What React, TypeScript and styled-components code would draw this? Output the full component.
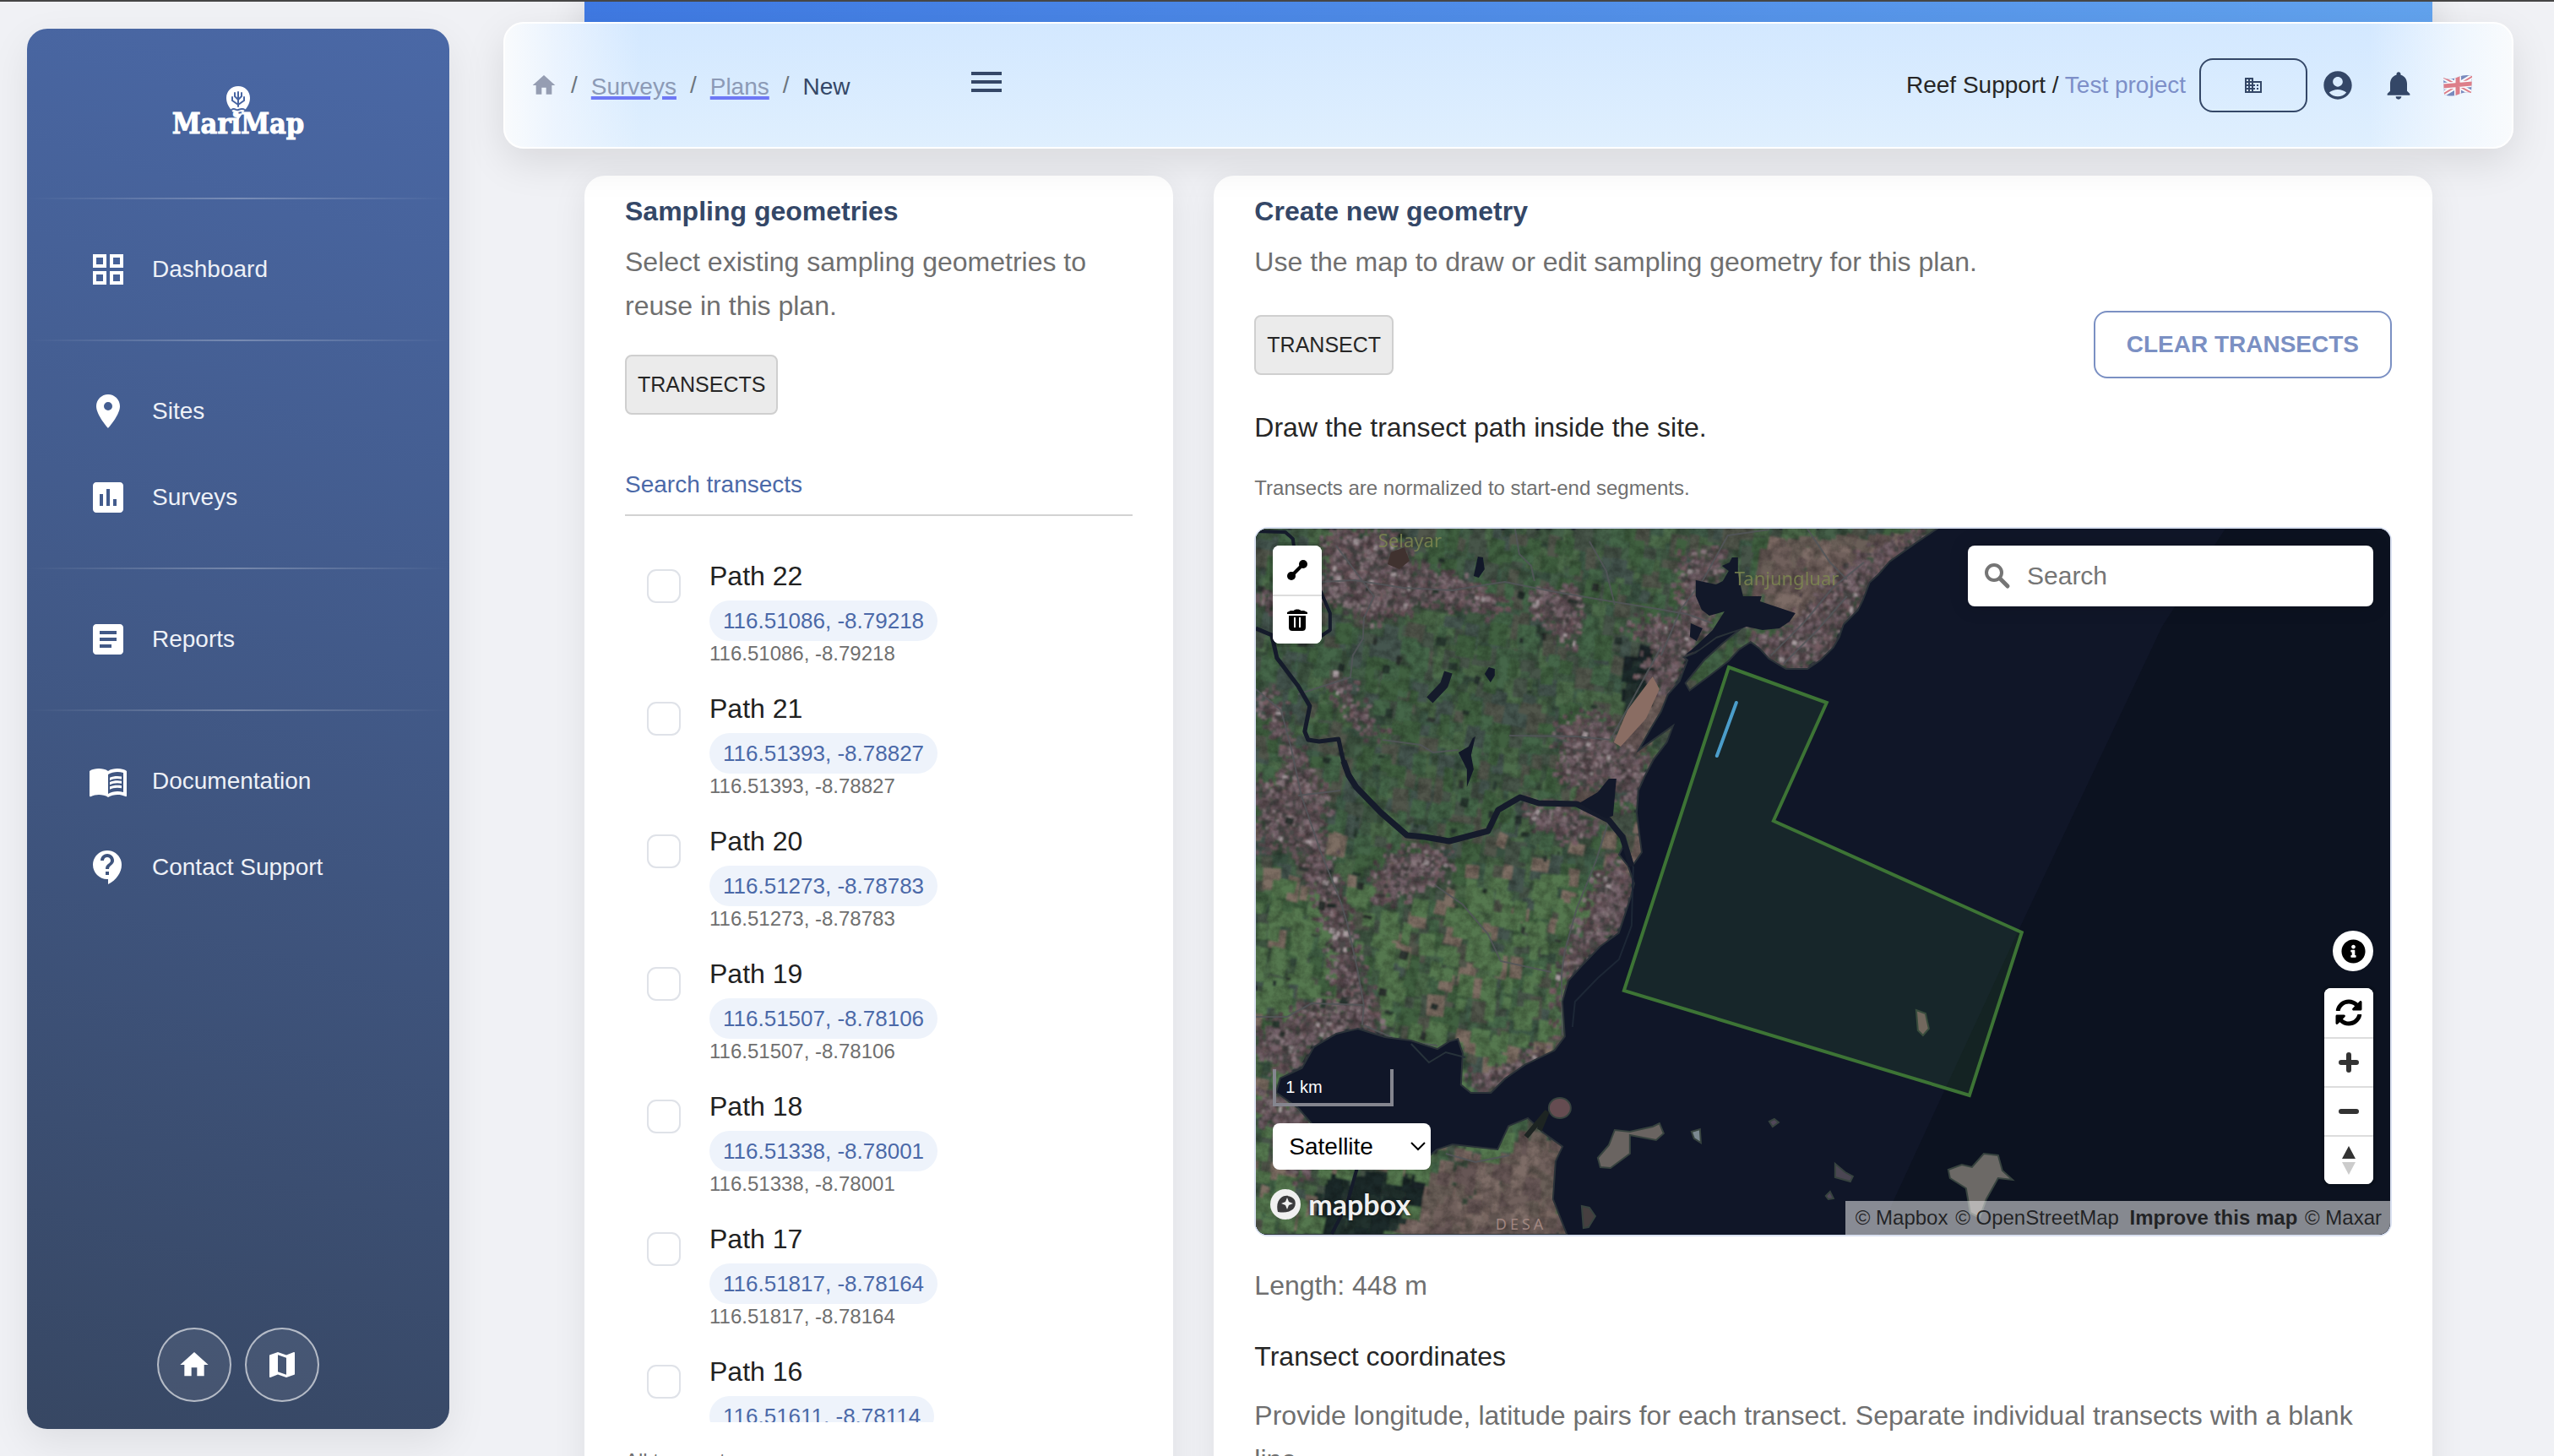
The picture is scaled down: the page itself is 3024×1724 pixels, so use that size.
import React from "react";
import styled, { createGlobalStyle } from "styled-components";
import {
  MdPlace,
  MdAssessment,
  MdArticle,
  MdMenuBook,
  MdContactSupport,
  MdHome,
  MdMap,
  MdMenu,
  MdBusiness,
  MdAccountCircle,
  MdNotifications,
} from "react-icons/md";
import { FaSyncAlt, FaInfoCircle } from "react-icons/fa";

const sans = `"Liberation Sans", Arial, Helvetica, sans-serif`;
const ink = "#344767";
const muted = "#6f6f6f";
const text = "#262626";

const GlobalStyle = createGlobalStyle`
  *, *::before, *::after { box-sizing: border-box; }
  body { margin: 0; background: #f0f1f5; font-family: ${sans}; font-size: 32px; line-height: 52px; color: ${text}; }
  h2, p, ul { margin: 0; padding: 0; }
  button, input, select { font-family: inherit; margin: 0; }
  button { cursor: pointer; }
`;

/* ---------- shell ---------- */

const Shell = styled.div`
  display: flex;
  height: 100vh;
  overflow: hidden;
  border-top: 2px solid #464646;
`;

const Sidebar = styled.aside`
  display: flex;
  flex-direction: column;
  flex: 0 0 500px;
  margin: 32px 0 32px 32px;
  padding-bottom: 32px;
  border-radius: 24px;
  background: linear-gradient(195deg, #4a68a6, #374763);
  box-shadow: 0 16px 48px rgba(0, 0, 0, 0.08);
`;

const Brand = styled.div`
  display: flex;
  flex-direction: column;
  align-items: center;
  height: 200px;
  padding-top: 68px;
  color: #fff;
`;

const BrandName = styled.span`
  margin-top: -16px;
  font: bold 34px/40px "DejaVu Serif Condensed", "DejaVu Serif", serif;
  -webkit-text-stroke: 1px #fff;
`;

const Divider = styled.hr`
  width: 100%;
  height: 2px;
  margin: 0;
  border: 0;
  background: linear-gradient(to right, rgba(255, 255, 255, 0), rgba(255, 255, 255, 0.27), rgba(255, 255, 255, 0));
`;

const NavGroup = styled.ul`
  margin: 32px 0;
  list-style: none;
`;

const NavLink = styled.a`
  display: flex;
  align-items: center;
  gap: 28px;
  height: 102px;
  padding-left: 72px;
  color: #eef1f7;
  font-size: 28px;
  text-decoration: none;
  svg { color: #fff; }
`;

const SidebarFooter = styled.div`
  display: flex;
  justify-content: center;
  gap: 16px;
  margin-top: auto;
`;

const RoundLink = styled.a`
  display: grid;
  place-items: center;
  width: 88px;
  height: 88px;
  border: 2px solid rgba(255, 255, 255, 0.6);
  border-radius: 50%;
  background: rgba(255, 255, 255, 0.07);
  color: #fff;
`;

const Main = styled.main`
  flex: 1;
  min-width: 0;
  padding: 0 48px 0 64px;
`;

const Banner = styled.div`
  height: 100px;
  margin: 0 96px;
  background: linear-gradient(100deg, #3f79e2, #62a3ee);
  box-shadow: 0 0 48px rgba(0, 0, 0, 0.14);
`;

/* ---------- header ---------- */

const Header = styled.header`
  position: relative;
  z-index: 2;
  display: flex;
  align-items: center;
  height: 150px;
  margin-top: -76px;
  padding: 0 46px 0 30px;
  border: 2px solid #fff;
  border-radius: 24px;
  background:
    linear-gradient(to right, #f9fbfd, rgba(240, 246, 254, 0.8) 60px, rgba(230, 242, 255, 0) 160px),
    linear-gradient(to left, #f9fbfd, rgba(244, 249, 254, 0.85) 60px, rgba(230, 242, 255, 0) 170px),
    linear-gradient(to bottom, #d3e8ff, #dfeffe);
  box-shadow: 0 16px 48px rgba(0, 0, 0, 0.1);
  font-size: 28px;
`;

const Crumbs = styled.nav`
  display: flex;
  align-items: center;
  gap: 16px;
  flex: 0 0 516px;
  color: ${ink};
`;

const Slash = styled.span`
  color: #6c757d;
`;

const Crumb = styled.span`
  padding-top: 4px;
`;

const CrumbLink = styled.a`
  padding-top: 4px;
  color: #8c9ab6;
  text-decoration: underline;
  text-decoration-color: #6e78f5;
  text-decoration-thickness: 4px;
  text-underline-offset: 2px;
`;

const HomeCrumb = styled.a`
  display: flex;
  color: #959db2;
`;

const IconButton = styled.button`
  display: flex;
  padding: 0;
  border: 0;
  background: none;
  color: ${ink};
`;

const MenuButton = styled(IconButton)`
  padding-bottom: 8px;
`;

const HeaderActions = styled.div`
  display: flex;
  align-items: center;
  margin-left: auto;
  gap: 32px;
`;

const ProjectSwitch = styled.div`
  display: flex;
  align-items: center;
  gap: 16px;
`;

const ProjectLink = styled.a`
  color: #7d8fc8;
  text-decoration: none;
`;

const OrgButton = styled.button`
  display: grid;
  place-items: center;
  width: 128px;
  height: 64px;
  border: 2px solid ${ink};
  border-radius: 16px;
  background: none;
  color: ${ink};
`;

/* ---------- cards ---------- */

const Columns = styled.div`
  display: grid;
  grid-template-columns: calc((100% - 96px) / 3) 1fr;
  gap: 48px;
  margin: 32px 96px 0;
`;

const Card = styled.section`
  min-width: 0;
  padding: 16px 48px 64px;
  border-radius: 24px;
  background: #fff;
  box-shadow: 0 8px 40px rgba(0, 0, 0, 0.08);
`;

const CardTitle = styled.h2`
  margin-bottom: 8px;
  color: ${ink};
  font-size: 32px;
`;

const Body = styled.p<{ $strong?: boolean; $gap?: number }>`
  margin-top: ${(p) => p.$gap ?? 0}px;
  color: ${(p) => (p.$strong ? text : muted)};
`;

const Caption = styled.p`
  margin-top: 24px;
  color: ${muted};
  font-size: 24px;
  line-height: 44px;
`;

const Toggle = styled.button`
  height: 71px;
  padding: 0 13px;
  border: 2px solid #cfcfcf;
  border-radius: 8px;
  background: #ebebeb;
  color: ${text};
  font-size: 25px;
`;

const ToggleRow = styled.div`
  display: flex;
  align-items: center;
  justify-content: space-between;
  margin-top: 32px;
`;

const OutlineButton = styled.button`
  height: 80px;
  padding: 0 37px;
  border: 2px solid #7b90c3;
  border-radius: 16px;
  background: #fff;
  color: #7b90c3;
  font-size: 28px;
  font-weight: bold;
`;

const SearchTransects = styled.input`
  display: block;
  width: 100%;
  height: 56px;
  margin-top: 64px;
  padding: 0 0 16px;
  border: 0;
  border-bottom: 2px solid #d2d2d2;
  outline: 0;
  background: none;
  font-size: 28px;
  &::placeholder { color: #4b69a8; opacity: 1; }
`;

const PathList = styled.ul`
  max-height: 1040px;
  margin-top: 33px;
  overflow: hidden;
  list-style: none;
`;

const PathItem = styled.label`
  display: flex;
  gap: 34px;
  padding: 13px 0 12px 26px;
`;

const Checkbox = styled.input`
  appearance: none;
  flex: none;
  width: 40px;
  height: 40px;
  margin: 17px 0 0;
  border: 2px solid #dfe2e8;
  border-radius: 11px;
  background: #fff;
`;

const PathText = styled.span`
  display: flex;
  flex-direction: column;
  align-items: flex-start;
`;

const PathName = styled.span`
  color: #212121;
  line-height: 50px;
`;

const Chip = styled.span`
  margin-top: 4px;
  padding: 0 16px;
  border-radius: 24px;
  background: #eef3fb;
  color: #4b69a8;
  font-size: 26px;
  line-height: 48px;
`;

const PathCoords = styled.span`
  color: ${muted};
  font-size: 24px;
  line-height: 30px;
`;

/* ---------- map ---------- */

const MapFrame = styled.div`
  position: relative;
  height: 840px;
  margin-top: 24px;
  overflow: hidden;
  border: 2px solid #d9e0f0;
  border-radius: 16px;
  background: #101628;
`;

const MapCanvas = styled.svg`
  display: block;
  width: 100%;
  height: 100%;
`;

const Corner = styled.div<{ $v: "top" | "bottom"; $h: "left" | "right"; $clear?: number }>`
  position: absolute;
  ${(p) => p.$v}: ${(p) => p.$clear ?? 20}px;
  ${(p) => p.$h}: 20px;
  display: flex;
  flex-direction: column;
  align-items: ${(p) => (p.$h === "left" ? "flex-start" : "flex-end")};
  gap: 20px;
`;

const ControlGroup = styled.div`
  display: flex;
  flex-direction: column;
  overflow: hidden;
  border-radius: 8px;
  background: #fff;
  box-shadow: 0 0 0 4px rgba(0, 0, 0, 0.1);
`;

const ControlButton = styled.button`
  display: grid;
  place-items: center;
  width: 58px;
  height: 58px;
  padding: 0;
  border: 0;
  background: #fff;
  color: #000;
  & + & { border-top: 2px solid #ddd; }
`;

const InfoButton = styled.button`
  display: grid;
  place-items: center;
  width: 48px;
  height: 48px;
  padding: 0;
  border: 0;
  border-radius: 50%;
  background: #fff;
  color: #000;
`;

const Geocoder = styled.label`
  display: flex;
  align-items: center;
  gap: 18px;
  width: 480px;
  height: 72px;
  padding: 0 18px;
  border-radius: 8px;
  background: #fff;
  box-shadow: 0 0 20px 4px rgba(0, 0, 0, 0.1);
`;

const GeocoderInput = styled.input`
  flex: 1;
  min-width: 0;
  padding: 0;
  border: 0;
  outline: 0;
  font-size: 30px;
  &::placeholder { color: #757575; opacity: 1; }
`;

const ScaleBar = styled.div`
  width: 143px;
  height: 44px;
  padding-left: 11px;
  border: 4px solid #85868f;
  border-top: 0;
  color: #fff;
  font-size: 20px;
  line-height: 42px;
`;

const StyleSelect = styled.select`
  appearance: none;
  width: 187px;
  height: 55px;
  padding: 0 19px;
  border: 0;
  border-radius: 8px;
  background: #fff;
  color: #000;
  font-size: 28px;
`;

const SelectWrap = styled.div`
  position: relative;
  display: flex;
  svg {
    position: absolute;
    right: 6px;
    top: 22px;
    pointer-events: none;
  }
`;

const MapboxLogo = styled.a`
  position: absolute;
  left: 16px;
  bottom: 14px;
  display: flex;
  align-items: center;
  gap: 8px;
  color: #f0f0f0;
  font: 700 34px/44px Lato, sans-serif;
  text-decoration: none;
  text-shadow: 0 0 4px rgba(0, 0, 0, 0.6);
`;

const Attribution = styled.div`
  position: absolute;
  right: 0;
  bottom: 0;
  padding: 0 10px;
  background: rgba(255, 255, 255, 0.5);
  font-size: 24px;
  line-height: 40px;
  a { margin-left: 2px; color: rgba(0, 0, 0, 0.75); text-decoration: none; }
  a[data-strong] { margin-left: 6px; font-weight: bold; }
`;

/* ---------- satellite drawing ---------- */

type Pt = [number, number];

const parse = (s: string): Pt[] => s.split(" ").map((p) => p.split(",").map(Number) as Pt);

function inside([x, y]: Pt, poly: Pt[]) {
  let hit = false;
  for (let i = 0, j = poly.length - 1; i < poly.length; j = i++) {
    const [xi, yi] = poly[i];
    const [xj, yj] = poly[j];
    if (yi > y !== yj > y && x < ((xj - xi) * (y - yi)) / (yj - yi) + xi) hit = !hit;
  }
  return hit;
}

function randomizer(seed: number) {
  let s = seed;
  return () => {
    s = (s * 1664525 + 1013904223) % 4294967296;
    return s / 4294967296;
  };
}

const COAST =
  "0,0 805,0 781,16 750,38 736,54 726,63 718,84 712,96 695,113 690,128 683,140 668,155 653,165 628,165 608,153 597,141 586,133 572,142 559,156 537,173 514,190 510,183 532,156 554,136 579,116 545,128 520,146 505,152 510,156 501,180 487,196 479,216 467,236 450,266 492,236 486,252 470,273 460,292 452,310 450,336 453,360 456,383 447,396 438,363 418,343 436,372 429,386 440,400 447,420 443,436 436,457 429,478 407,494 387,515 369,535 362,560 365,601 353,617 318,634 295,650 278,667 255,667 244,658 246,621 240,603 229,606 215,615 184,605 153,601 121,591 95,597 68,613 54,638 28,650 23,668 50,687 68,708 72,757 190,757 215,736 233,730 287,736 300,708 322,699 340,716 362,732 354,749 351,794 367,835 0,835";

const COAST_POLY = parse(COAST);

const TOWNS = [
  "79,0 148,0 193,43 260,63 304,86 270,94 197,86 135,106 110,90 90,80 0,90 0,72 78,66",
  "322,76 376,66 380,100 371,143 349,116 330,96",
  "505,33 550,25 545,60 521,61 537,103 510,112 500,70",
  "440,110 500,100 540,108 505,152 510,156 480,200 455,170 470,140",
  "620,120 660,80 700,40 770,0 805,0 726,63 695,113 683,140 653,165 628,165 586,133 581,118",
  "354,230 403,215 429,256 450,266 470,273 452,310 450,340 418,296 383,305 360,290",
  "0,195 20,190 45,250 60,290 81,316 75,360 110,470 126,590 100,590 85,480 50,376 0,376 0,300 40,290 20,240",
  "84,175 100,172 130,220 150,250 135,245 105,215",
  "162,380 224,376 224,410 180,430 139,440 145,400",
  "310,325 383,330 400,350 380,372 330,352",
  "419,383 447,420 436,457 407,494 365,535 362,600 355,590 358,520 395,440 410,400",
  "118,500 135,560 153,601 121,591 80,597 40,640 0,620 0,590 66,562 110,562",
  "246,648 290,640 353,605 353,617 278,667 255,667",
  "0,660 23,672 50,687 66,708 30,720 0,690",
  "28,735 62,735 62,765 40,765",
].map(parse);

const SCRUB = [
  "190,760 215,736 233,730 287,736 300,708 322,699 362,732 351,794 367,835 150,835",
  "600,0 805,0 700,50 640,100 600,80 577,60",
  "420,250 430,222 470,170 478,200 455,235",
  "428,386 450,300 470,260 486,252 452,340 456,383 447,396",
  "383,325 418,296 400,290 370,300",
].map(parse);

const MARSH = [
  "72,757 190,757 160,800 120,835 60,835",
  "430,145 455,130 470,165 455,200 425,205",
  "330,790 351,794 367,835 345,835",
  "23,620 68,600 54,638 28,650",
].map(parse);

const GREENS = ["#3f5943", "#446048", "#3c5340", "#4a6647", "#415c4a", "#4e6c4c", "#47554a", "#394f3f", "#51564b", "#45664a", "#445650", "#40603f"];
const MAUVES = ["#5f4f54", "#69575c", "#74626a", "#54474c", "#85747a", "#63545a", "#755c62", "#4c4849"];
const BROWNS = ["#665754", "#70605c", "#786660", "#5f534f", "#6b5e58", "#7d6c66"];
const DARKS = ["#1c2c2a", "#22332e", "#1a2729", "#263430"];

function buildTerrain() {
  const rand = randomizer(7);
  const paths: Record<string, string> = {};
  const quad = (c: string, x: number, y: number, w: number, h: number, skew: number) => {
    paths[c] =
      (paths[c] || "") +
      `M${x.toFixed(1)} ${y.toFixed(1)}l${w.toFixed(1)} ${skew.toFixed(1)}l${(-skew).toFixed(1)} ${h.toFixed(1)}l${(-w).toFixed(1)} ${(-skew).toFixed(1)}z`;
  };
  const pick = (list: string[]) => list[Math.floor(rand() * list.length)];
  for (let y = -8; y < 840; y += 13) {
    for (let x = -8; x < 810; x += 11) {
      const jx = x + rand() * 8;
      const jy = y + rand() * 8;
      if (TOWNS.some((t) => inside([x, y], t))) continue;
      const zone = SCRUB.some((z) => inside([x, y], z)) ? BROWNS : MARSH.some((z) => inside([x, y], z)) ? DARKS : GREENS;
      const bright = zone === GREENS && y > 400 && rand() > 0.7;
      const bare = zone === GREENS && y > 330 && rand() > 0.93;
      quad(bare ? "#7d6e64" : bright ? "#54784f" : pick(zone), jx, jy, 9 + rand() * 14, 12 + rand() * 18, 1 + rand() * 4);
    }
  }
  for (let y = 0; y < 835; y += 4) {
    for (let x = 0; x < 806; x += 4) {
      const edge: Pt = [x + (rand() - 0.5) * 24, y + (rand() - 0.5) * 24];
      if (!TOWNS.some((t) => inside(edge, t))) continue;
      if (!inside([x, y], COAST_POLY)) continue;
      quad(rand() > 0.985 ? "#a89ca0" : pick(MAUVES), x, y, 3 + rand() * 4, 3 + rand() * 4, rand() * 2);
    }
  }
  for (let i = 0; i < 70; i++) {
    quad(pick(["#2a3a30", "#2f3430", "#26332f"]), rand() * 440, rand() * 600, 3 + rand() * 9, 3 + rand() * 8, rand() * 3);
  }
  return Object.entries(paths);
}

const TERRAIN = buildTerrain();

const ROADS = [
  "78,63 117,61 175,70 233,73 262,68 295,63 350,74 420,86 470,94 510,101 541,112",
  "608,1 559,8 530,60 503,96 480,150",
  "307,0 312,30 326,44 330,62",
  "95,20 140,80 128,106 127,130 115,150 112,176 50,196",
  "418,345 403,393 380,450 366,500 362,527 363,600",
  "0,190 30,215 42,260 54,316 77,383 100,440 108,466 120,520 128,564 126,588",
  "0,578 37,578 66,562 128,564",
  "128,588 170,606 215,612",
  "212,422 245,445 275,480 290,512 350,525",
  "150,250 195,256 210,265 240,262",
  "300,245 380,246 420,250 480,140",
  "653,0 680,40 700,60",
  "610,150 650,110 683,70 720,40",
  "625,160 665,120 700,80",
  "225,740 260,750 300,742",
  "50,316 100,310",
  "395,15 415,50 425,90",
];

function Satellite() {
  return (
    <MapCanvas viewBox="0 0 1343 836" preserveAspectRatio="xMidYMid slice" role="img" aria-label="Satellite map of the survey site">
      <defs>
        <clipPath id="land">
          <polygon points={COAST} />
        </clipPath>
        <filter id="soften" x="0" y="0" width="100%" height="100%">
          <feGaussianBlur stdDeviation="1" />
        </filter>
        <filter id="grain" x="0" y="0" width="100%" height="100%">
          <feTurbulence type="fractalNoise" baseFrequency="0.09" numOctaves="4" seed="4" />
          <feColorMatrix values="0 0 0 0 0  0 0 0 0 0  0 0 0 0 0  0 1.6 0 0 -0.55" />
        </filter>
      </defs>
      <rect width="1343" height="836" fill="#101628" />
      <polygon points="1148,0 1073,116 903,476 755,796 738,836 1343,836 1343,0" fill="#0c1220" />
      <polygon points={COAST} fill="#3f5141" stroke="#2a3238" strokeWidth="4" />
      <g clipPath="url(#land)">
        <g filter="url(#soften)">
          {TERRAIN.map(([fill, d]) => (
            <path key={fill} d={d} fill={fill} />
          ))}
        </g>
        <rect width="810" height="836" filter="url(#grain)" opacity="0.35" />
        <polygon points="424,253 440,215 470,175 478,190 462,225 432,258" fill="#8a6d63" />
        <polygon points="160,28 176,22 182,38 170,48 156,42" fill="#40322f" />
        <g fill="none" stroke="#53565a" strokeWidth="2" opacity="0.85">
          {ROADS.map((r) => (
            <polyline key={r} points={r} />
          ))}
        </g>
      </g>
      <g fill="none" stroke="#151b2b" strokeLinejoin="round">
        <polyline points="0,118 19,126 25,153 50,186 64,210 58,240 62,250 75,252 98,249 102,268 106,283 119,306" strokeWidth="5" />
        <polyline points="104,275 110,292 119,306 148,336 179,363 200,365 229,370 275,358 287,333 313,318 335,325 380,326 418,345 434,365 445,400" strokeWidth="7" />
        <polyline points="0,3 35,4 44,12 45,20 75,70 88,100 88,120 76,128" strokeWidth="4" />
        <polyline points="120,757 108,800 90,835" strokeWidth="4" />
        <polyline points="228,170 223,185 206,203" strokeWidth="10" />
      </g>
      <g fill="#121829">
        <polygon points="271,172 276,164 283,166 283,174 278,182" />
        <polygon points="263,33 269,34 271,48 264,58 258,56" />
        <polygon points="257,248 260,246 255,268 258,285 250,306 250,285 240,265 252,258" />
        <polygon points="521,61 545,66 553,62 560,50 552,44 561,40 564,34 571,34 571,54 577,80 599,80 597,86 639,100 632,110 620,118 600,120 581,116 545,128 525,143 508,150 520,140 541,120 555,98 537,103 528,96 521,80" />
        <polygon points="515,112 529,118 522,133 514,128" />
        <polygon points="383,325 405,312 418,296 427,296 423,340 415,343" />
      </g>
      <g stroke="#37433f" strokeWidth="2">
        <ellipse cx="360" cy="686" rx="13" ry="12" fill="#654c51" />
        <polygon points="405,745 418,730 425,712 443,714 470,708 478,704 483,716 474,724 443,718 443,740 420,757 408,756" fill="#6a6461" />
        <polygon points="516,714 526,711 527,727 519,722" fill="#7b8891" />
        <polygon points="608,702 614,699 619,703 612,708" fill="#51475a" />
        <polygon points="675,790 680,785 684,793 678,794" fill="#51475a" />
        <polygon points="386,802 395,804 402,814 394,827 388,828" fill="#463f40" />
        <polygon points="686,752 698,762 707,767 704,773 686,768" fill="#4b4653" />
        <polygon points="782,570 793,574 797,592 790,600 784,594" fill="#7b6366" />
        <polygon points="820,759 836,753 848,756 862,740 879,742 884,760 896,771 879,769 865,794 857,816 846,810 841,781 822,769" fill="#6c6966" />
      </g>
      <polyline points="320,720 345,690 336,712" fill="none" stroke="#1d2422" strokeWidth="6" />
      <polyline points="184,610 205,632 225,620 248,626" fill="none" stroke="#27323a" strokeWidth="2" />
      <polyline points="447,400 445,470 430,510 405,532 378,560 375,590" fill="none" stroke="#1d2736" strokeWidth="2" />
      <g fill="#7d8750" fontFamily='"Noto Sans", sans-serif' fontSize="22">
        <text x="145" y="22" opacity="0.85">Selayar</text>
        <text x="567" y="67" opacity="0.85">Tanjungluar</text>
        <text x="284" y="830" fill="#a08680" fontSize="18" letterSpacing="4">DESA</text>
      </g>
      <polygon points="560,164 676,206 613,346 907,478 845,671 436,547" fill="rgba(64,132,54,0.15)" stroke="#3d7435" strokeWidth="4" />
      <line x1="569" y1="206" x2="546" y2="269" stroke="#4b9dca" strokeWidth="4" strokeLinecap="round" />
    </MapCanvas>
  );
}

/* ---------- small drawings ---------- */

const GridIcon = () => (
  <svg width="48" height="48" viewBox="0 0 24 24" fill="currentColor" aria-hidden="true">
    <path fillRule="evenodd" d="M3 3h8v8H3zM5 5v4h4V5zM13 3h8v8h-8zM15 5v4h4V5zM3 13h8v8H3zM5 15v4h4v-4zM13 13h8v8h-8zM15 15v4h4v-4z" />
  </svg>
);

const CoralPin = () => (
  <svg width="30" height="40" viewBox="0 0 30 40" aria-hidden="true">
    <path fill="#fff" d="M15 0C7 0 1 6 1 14c0 7 4 12 8 17l6 9 6-9c4-5 8-10 8-17C29 6 23 0 15 0z" />
    <g fill="none" stroke="#4865a2" strokeWidth="2" strokeLinecap="round">
      <path d="M15 24V7M15 16l-4-4V8M15 16l4-4V8M15 22l-7-5v-4M15 22l7-5v-4" />
      <path d="M7 28c4-3 5 1 8 0s5-2 8 0M9 32c3-2 4 1 6 0s4-1 6 0" />
    </g>
  </svg>
);

const UkFlag = () => (
  <svg width="36" height="26" viewBox="0 0 36 26" opacity="0.6" aria-hidden="true">
    <clipPath id="flag">
      <path d="M1 4C8 7 14 5 19 3s10-3 16-1l-1 20c-6-2-11 0-16 2s-11 2-16 0z" />
    </clipPath>
    <g clipPath="url(#flag)">
      <rect width="36" height="26" fill="#2b4394" />
      <path d="M0 3L36 23M0 24L36 2" stroke="#fff" strokeWidth="6" />
      <path d="M0 3L36 23M0 24L36 2" stroke="#d22f3c" strokeWidth="2" />
      <path d="M18 0V26M0 14L36 11" stroke="#fff" strokeWidth="8" />
      <path d="M18 0V26M0 14L36 11" stroke="#d22f3c" strokeWidth="5" />
    </g>
  </svg>
);

const LineIcon = () => (
  <svg width="28" height="28" viewBox="0 0 28 28" aria-hidden="true">
    <path d="M7 21L21 7" stroke="#000" strokeWidth="4" />
    <circle cx="7" cy="21" r="5" />
    <circle cx="21" cy="7" r="5" />
  </svg>
);

const TrashIcon = () => (
  <svg width="28" height="28" viewBox="0 0 28 28" aria-hidden="true">
    <path d="M10 3c0-2 8-2 8 0h4l4 2v2H2V5l4-2zM4 9h20v14c0 3-2 4-4 4H8c-2 0-4-1-4-4z" />
    <path d="M11 11v12M17 11v12" stroke="#fff" strokeWidth="2" />
  </svg>
);

const SearchIcon = () => (
  <svg width="34" height="34" viewBox="0 0 34 34" fill="none" stroke="#757575" aria-hidden="true">
    <circle cx="13" cy="13" r="9" strokeWidth="4" />
    <path d="M20 20l9 9" strokeWidth="5" strokeLinecap="round" />
  </svg>
);

const PlusIcon = () => (
  <svg width="24" height="24" viewBox="0 0 24 24" stroke="#333" strokeWidth="6" strokeLinecap="round" aria-hidden="true">
    <path d="M3 12h18M12 3v18" />
  </svg>
);

const MinusIcon = () => (
  <svg width="24" height="24" viewBox="0 0 24 24" stroke="#333" strokeWidth="6" strokeLinecap="round" aria-hidden="true">
    <path d="M3 12h18" />
  </svg>
);

const CompassIcon = () => (
  <svg width="20" height="36" viewBox="0 0 20 36" aria-hidden="true">
    <path d="M2 16L10 1l8 15z" fill="#333" />
    <path d="M2 20l8 15 8-15z" fill="#ccc" />
  </svg>
);

const Chevron = () => (
  <svg width="18" height="12" viewBox="0 0 18 12" fill="none" stroke="#000" strokeWidth="2" aria-hidden="true">
    <path d="M1 1l8 8 8-8" />
  </svg>
);

const MapboxMark = () => (
  <svg width="38" height="38" viewBox="0 0 38 38" aria-hidden="true">
    <circle cx="19" cy="19" r="18" fill="#f0f0f0" />
    <path d="M10 28c-2-8 0-14 4-17 5-4 13-2 16 3 2 5 0 10-4 12-4 3-10 3-16 2z" fill="#3b3b3d" />
    <path d="M21 11l2 5 5 2-5 2-2 5-2-5-5-2 5-2z" fill="#f0f0f0" />
  </svg>
);

/* ---------- data ---------- */

const NAV = [
  [{ label: "Dashboard", Icon: GridIcon }],
  [
    { label: "Sites", Icon: MdPlace },
    { label: "Surveys", Icon: MdAssessment },
  ],
  [{ label: "Reports", Icon: MdArticle }],
  [
    { label: "Documentation", Icon: MdMenuBook },
    { label: "Contact Support", Icon: MdContactSupport },
  ],
];

const PATHS = [
  { name: "Path 22", at: "116.51086, -8.79218" },
  { name: "Path 21", at: "116.51393, -8.78827" },
  { name: "Path 20", at: "116.51273, -8.78783" },
  { name: "Path 19", at: "116.51507, -8.78106" },
  { name: "Path 18", at: "116.51338, -8.78001" },
  { name: "Path 17", at: "116.51817, -8.78164" },
  { name: "Path 16", at: "116.51611, -8.78114" },
];

export default function App() {
  return (
    <>
      <GlobalStyle />
      <Shell>
        <Sidebar>
          <Brand>
            <CoralPin />
            <BrandName>MariMap</BrandName>
          </Brand>
          {NAV.map((group) => (
            <React.Fragment key={group[0].label}>
              <Divider />
              <NavGroup>
                {group.map(({ label, Icon }) => (
                  <li key={label}>
                    <NavLink href="#">
                      <Icon size={48} />
                      {label}
                    </NavLink>
                  </li>
                ))}
              </NavGroup>
            </React.Fragment>
          ))}
          <SidebarFooter>
            <RoundLink href="#" aria-label="Home">
              <MdHome size={40} />
            </RoundLink>
            <RoundLink href="#" aria-label="Map">
              <MdMap size={40} />
            </RoundLink>
          </SidebarFooter>
        </Sidebar>

        <Main>
          <Banner />
          <Header>
            <Crumbs aria-label="Breadcrumb">
              <HomeCrumb href="#" aria-label="Home">
                <MdHome size={32} />
              </HomeCrumb>
              <Slash>/</Slash>
              <CrumbLink href="#">Surveys</CrumbLink>
              <Slash>/</Slash>
              <CrumbLink href="#">Plans</CrumbLink>
              <Slash>/</Slash>
              <Crumb aria-current="page">New</Crumb>
            </Crumbs>
            <MenuButton aria-label="Menu">
              <MdMenu size={48} />
            </MenuButton>
            <HeaderActions>
              <ProjectSwitch>
                <span>
                  Reef Support / <ProjectLink href="#">Test project</ProjectLink>
                </span>
                <OrgButton aria-label="Switch organisation">
                  <MdBusiness size={24} />
                </OrgButton>
                <IconButton aria-label="Account">
                  <MdAccountCircle size={40} />
                </IconButton>
              </ProjectSwitch>
              <IconButton aria-label="Notifications">
                <MdNotifications size={40} />
              </IconButton>
              <IconButton aria-label="Language">
                <UkFlag />
              </IconButton>
            </HeaderActions>
          </Header>

          <Columns>
            <Card>
              <CardTitle>Sampling geometries</CardTitle>
              <Body>Select existing sampling geometries to reuse in this plan.</Body>
              <ToggleRow>
                <Toggle aria-pressed="true">TRANSECTS</Toggle>
              </ToggleRow>
              <SearchTransects aria-label="Search transects" placeholder="Search transects" />
              <PathList>
                {PATHS.map((p) => (
                  <li key={p.name}>
                    <PathItem>
                      <Checkbox type="checkbox" />
                      <PathText>
                        <PathName>{p.name}</PathName>
                        <Chip>{p.at}</Chip>
                        <PathCoords>{p.at}</PathCoords>
                      </PathText>
                    </PathItem>
                  </li>
                ))}
              </PathList>
              <Caption>All transects</Caption>
            </Card>

            <Card>
              <CardTitle>Create new geometry</CardTitle>
              <Body>Use the map to draw or edit sampling geometry for this plan.</Body>
              <ToggleRow>
                <Toggle aria-pressed="true">TRANSECT</Toggle>
                <OutlineButton>CLEAR TRANSECTS</OutlineButton>
              </ToggleRow>
              <Body $strong $gap={32}>
                Draw the transect path inside the site.
              </Body>
              <Caption>Transects are normalized to start-end segments.</Caption>
              <MapFrame>
                <Satellite />
                <Corner $v="top" $h="left">
                  <ControlGroup>
                    <ControlButton aria-label="Draw line">
                      <LineIcon />
                    </ControlButton>
                    <ControlButton aria-label="Delete">
                      <TrashIcon />
                    </ControlButton>
                  </ControlGroup>
                </Corner>
                <Corner $v="top" $h="right">
                  <Geocoder>
                    <SearchIcon />
                    <GeocoderInput aria-label="Search" placeholder="Search" />
                  </Geocoder>
                </Corner>
                <Corner $v="bottom" $h="left" $clear={77}>
                  <ScaleBar>1 km</ScaleBar>
                  <SelectWrap>
                    <StyleSelect aria-label="Map style" defaultValue="Satellite">
                      <option>Satellite</option>
                    </StyleSelect>
                    <Chevron />
                  </SelectWrap>
                </Corner>
                <Corner $v="bottom" $h="right" $clear={60}>
                  <InfoButton aria-label="Map information">
                    <FaInfoCircle size={29} />
                  </InfoButton>
                  <ControlGroup>
                    <ControlButton aria-label="Reset view">
                      <FaSyncAlt size={32} />
                    </ControlButton>
                    <ControlButton aria-label="Zoom in">
                      <PlusIcon />
                    </ControlButton>
                    <ControlButton aria-label="Zoom out">
                      <MinusIcon />
                    </ControlButton>
                    <ControlButton aria-label="Reset bearing">
                      <CompassIcon />
                    </ControlButton>
                  </ControlGroup>
                </Corner>
                <MapboxLogo href="#">
                  <MapboxMark />
                  mapbox
                </MapboxLogo>
                <Attribution>
                  <a href="#">© Mapbox</a> <a href="#">© OpenStreetMap</a>{" "}
                  <a href="#" data-strong>
                    Improve this map
                  </a>{" "}
                  <a href="#">© Maxar</a>
                </Attribution>
              </MapFrame>
              <Body $gap={32}>Length: 448 m</Body>
              <Body $strong $gap={32}>
                Transect coordinates
              </Body>
              <Body $gap={18}>
                Provide longitude, latitude pairs for each transect. Separate individual transects with a blank line.
              </Body>
            </Card>
          </Columns>
        </Main>
      </Shell>
    </>
  );
}
